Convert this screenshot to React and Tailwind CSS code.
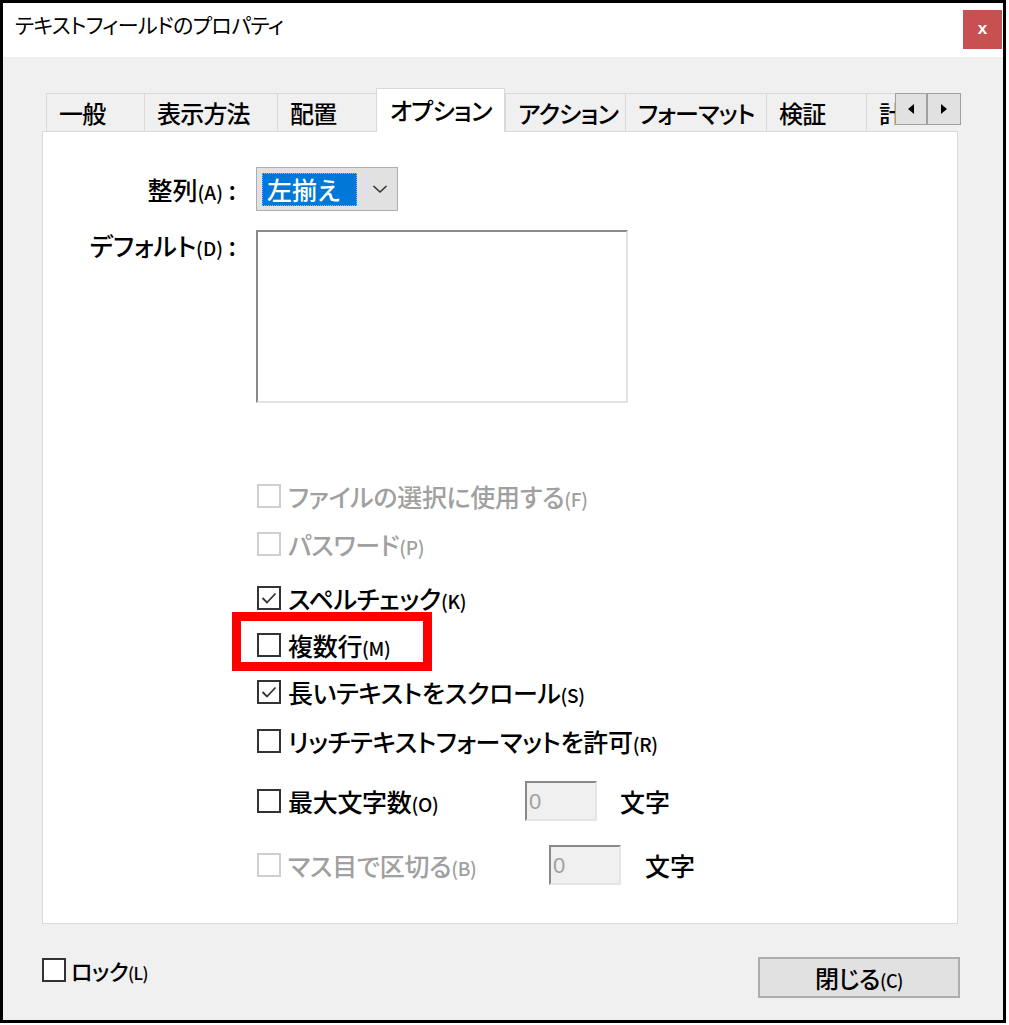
import React from "react";

const jp = "font-['Noto_Sans_CJK_JP','Noto_Sans',sans-serif] [font-feature-settings:'palt'] font-medium";

const tabs = [
  { name: "一般", w: "w-[98px]" },
  { name: "表示方法", w: "w-[133px]" },
  { name: "配置", w: "w-[99px]" },
  { name: "オプション", w: "w-[129px]", active: true },
  { name: "アクション", w: "w-[120px]" },
  { name: "フォーマット", w: "w-[141px]" },
  { name: "検証", w: "w-[100px]" },
  { name: "計算", w: "w-[29px]" },
];

function Box({ checked, disabled }) {
  return (
    <span
      className={`w-[24px] h-[24px] border-2 bg-white flex items-center justify-center shrink-0 ${
        disabled ? "border-[#cfcfcf]" : "border-[#333333]"
      }`}
    >
      {checked && (
        <svg width="18" height="18" viewBox="0 0 18 18">
          <polyline points="2.5,9 7,13.5 15.5,4.5" fill="none" stroke="#333333" strokeWidth="1.8" />
        </svg>
      )}
    </span>
  );
}

function Label({ text, k, small = "text-[19px]" }) {
  return (
    <span className="whitespace-nowrap">
      {text}
      <span className={small}>({k})</span>
    </span>
  );
}

function CheckRow({ text, k, checked, disabled, className = "", width, children }) {
  return (
    <div className={`relative flex items-center h-[36px] ml-[214px] ${className}`}>
      <div className={`flex items-center gap-[7px] ${width || ""}`}>
        <Box checked={checked} disabled={disabled} />
        <span className={`text-[25px] leading-none tracking-[-0.3px] ${disabled ? "text-[#a0a0a0]" : "text-black"}`}>
          <Label text={text} k={k} />
        </span>
      </div>
      {children}
    </div>
  );
}

function NumBox() {
  return (
    <div className="w-[72px] h-[40px] bg-[#f0f0f0] border-2 border-t-[#8a8a8a] border-l-[#8a8a8a] border-r-[#e6e6e6] border-b-[#e6e6e6] flex items-center pl-[2px] text-[22px] font-normal text-[#a0a0a0] font-['Liberation_Sans',sans-serif]">
      0
    </div>
  );
}

export default function App() {
  return (
    <div className={`w-[1009px] h-[1025px] bg-white ${jp}`}>
      <div className="w-[1006px] h-[1023px] border-[3px] border-black flex flex-col">
        {/* title bar */}
        <div className="h-[54px] bg-white flex items-start justify-between shrink-0">
          <div className="pl-[12px] pt-[11px] text-[21px] leading-none text-black tracking-[-0.6px] font-normal">
            テキストフィールドのプロパティ
          </div>
          <div className="mt-[7px] mr-[1px] w-[39px] h-[39px] bg-[#c75050] flex items-center justify-center text-white text-[17px] font-bold font-['Liberation_Sans',sans-serif] leading-none pb-[2px]">
            x
          </div>
        </div>

        {/* body */}
        <div className="flex-1 bg-[#f0f0f0] pl-[39px] pt-[31px]">
          {/* tabs */}
          <div className="relative z-10 flex items-end h-[43px] ml-[4px]">
            {tabs.map((t) =>
              t.active ? (
                <div
                  key={t.name}
                  className={`${t.w} h-[44px] -mb-px bg-white border border-b-0 border-[#d9d9d9] pl-[13px] pt-[3px] text-[24px] tracking-[-0.8px] text-black leading-[36px] whitespace-nowrap overflow-hidden`}
                >
                  {t.name}
                </div>
              ) : (
                <div
                  key={t.name}
                  className={`${t.w} h-[38px] bg-[#f0f0f0] border border-b-0 border-r-0 border-[#d9d9d9] pl-[12px] text-[24px] tracking-[-0.8px] text-black leading-[38px] whitespace-nowrap overflow-hidden`}
                >
                  {t.name}
                </div>
              )
            )}
            <div className="self-start mt-[5px] flex h-[32px] border border-[#a0a0a0] bg-[#e1e1e1]">
              <div className="w-[32px] h-full flex items-center justify-center border-r-2 border-[#a0a0a0]">
                <svg width="8" height="12" viewBox="0 0 8 12">
                  <polygon points="7,1 1,6 7,11" fill="#000" />
                </svg>
              </div>
              <div className="w-[32px] h-full flex items-center justify-center">
                <svg width="8" height="12" viewBox="0 0 8 12">
                  <polygon points="1,1 7,6 1,11" fill="#000" />
                </svg>
              </div>
            </div>
          </div>

          {/* panel */}
          <div className="w-[916px] h-[793px] bg-white border border-[#d9d9d9] flex flex-col">
            <div className="flex items-center mt-[35px] h-[44px]">
              <div className="w-[193px] text-right text-[25px] text-black leading-none">
                <Label text="整列" k="A" /> :
              </div>
              <div className="ml-[20px] w-[142px] h-[44px] bg-[#e1e1e1] border border-[#adadad] flex items-center pl-[5px]">
                <div className="w-[95px] h-[33px] bg-[#0078d7] border border-dotted border-[#f0a040] text-white text-[25px] leading-[30px] pl-[4px]">
                  左揃え
                </div>
                <svg className="ml-[15px]" width="16" height="10" viewBox="0 0 16 10">
                  <polyline points="1.5,2 8,8 14.5,2" fill="none" stroke="#333" strokeWidth="1.6" />
                </svg>
              </div>
            </div>

            <div className="flex items-start mt-[19px]">
              <div className="w-[193px] text-right text-[25px] text-black leading-none pt-[3px]">
                <Label text="デフォルト" k="D" /> :
              </div>
              <div className="ml-[20px] w-[372px] h-[173px] bg-white border-2 border-t-[#8a8a8a] border-l-[#8a8a8a] border-r-[#e3e3e3] border-b-[#e3e3e3]" />
            </div>

            <CheckRow text="ファイルの選択に使用する" k="F" disabled className="mt-[75px]" />
            <CheckRow text="パスワード" k="P" disabled className="mt-[12px]" />
            <CheckRow text="スペルチェック" k="K" checked className="mt-[18px]" />
            <CheckRow text="複数行" k="M" className="mt-[11px]">
              <div className="absolute left-[-25px] top-[-15px] w-[200px] h-[59px] border-[9px] border-[#ff0000]" />
            </CheckRow>
            <CheckRow text="長いテキストをスクロール" k="S" checked className="mt-[11px]" />
            <CheckRow text="リッチテキストフォーマットを許可" k="R" className="mt-[13px]" />
            <CheckRow text="最大文字数" k="O" className="mt-[24px]" width="w-[268px]">
              <NumBox />
              <span className="ml-[23px] text-[25px] text-black leading-none">文字</span>
            </CheckRow>
            <CheckRow text="マス目で区切る" k="B" disabled className="mt-[28px]" width="w-[292px]">
              <NumBox />
              <span className="ml-[24px] text-[25px] text-black leading-none">文字</span>
            </CheckRow>
          </div>

          {/* bottom */}
          <div className="flex items-start justify-between mt-[33px] pr-[43px]">
            <div className="flex items-center gap-[5px] mt-[1px]">
              <Box />
              <span className="text-[22px] text-black leading-none tracking-[-0.5px]">
                <Label text="ロック" k="L" small="text-[17px]" />
              </span>
            </div>
            <div className="w-[202px] h-[41px] bg-[#e1e1e1] border-2 border-[#adadad] flex items-center justify-center text-[24px] text-black leading-none tracking-[-0.5px]">
              <Label text="閉じる" k="C" small="text-[18px]" />
            </div>
          </div>
        </div>
      </div>
    </div>
  );
}
